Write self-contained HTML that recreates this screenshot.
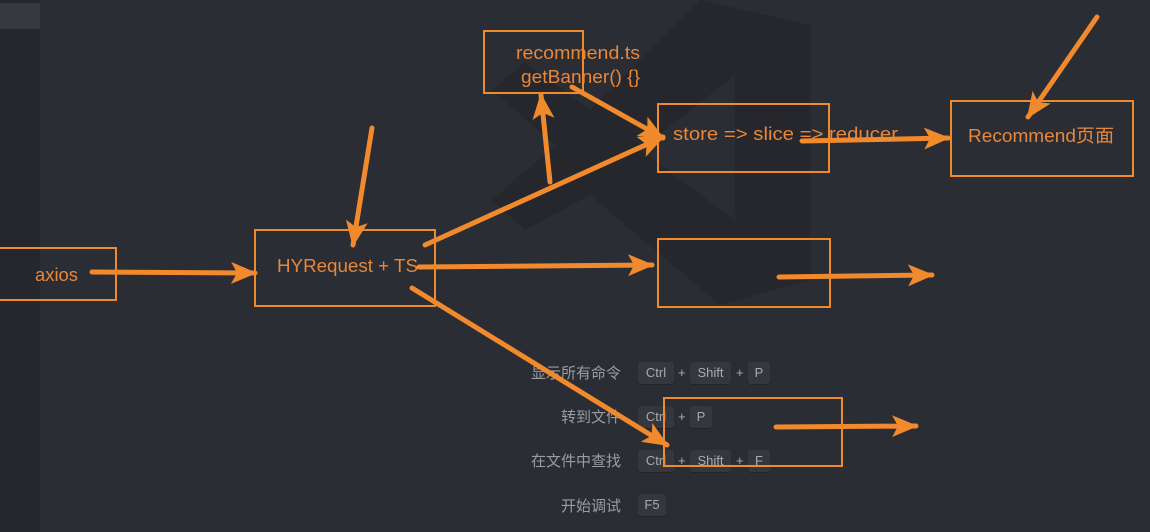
<!DOCTYPE html>
<html><head><meta charset="utf-8"><style>
html,body{margin:0;padding:0;}
body{width:1150px;height:532px;overflow:hidden;background:#2b2d34;position:relative;font-family:"Liberation Sans","Noto Sans CJK SC",sans-serif;}
svg{position:absolute;left:0;top:0;}
.lbl{position:absolute;right:529px;color:#9a9ca2;font-size:15px;white-space:nowrap;}
.k{position:absolute;height:22px;line-height:22px;background:#35373e;border-radius:3px;color:#a8aab0;font-size:13px;text-align:center;box-shadow:0 1px 0 #222328;}
.p{position:absolute;color:#a8aab0;font-size:13px;}
#top{z-index:2;}
</style></head><body>
<svg width="1150" height="532" viewBox="0 0 1150 532">
<rect x="0" y="0" width="40" height="532" fill="#25272d"/>
<rect x="0" y="3" width="40" height="26" fill="#363840"/>
<path d="M700,0 L810,25 L810,280 L720,305 L590,195 L525,230 L492,200 L555,145 L492,90 L525,62 L590,110 Z" fill="#25272c"/>
<path d="M735,75 L735,220 L640,150 Z" fill="#2b2d34"/>
</svg>
<div class="lbl" style="top:362px">显示所有命令</div>
<div class="lbl" style="top:406px">转到文件</div>
<div class="lbl" style="top:450px">在文件中查找</div>
<div class="lbl" style="top:495px">开始调试</div>
<div class="k" style="left:638px;top:362px;width:36px">Ctrl</div><div class="p" style="left:678px;top:365px">+</div>
<div class="k" style="left:690px;top:362px;width:41px">Shift</div><div class="p" style="left:736px;top:365px">+</div>
<div class="k" style="left:748px;top:362px;width:22px">P</div>
<div class="k" style="left:638px;top:406px;width:36px">Ctrl</div><div class="p" style="left:678px;top:409px">+</div>
<div class="k" style="left:690px;top:406px;width:22px">P</div>
<div class="k" style="left:638px;top:450px;width:36px">Ctrl</div><div class="p" style="left:678px;top:453px">+</div>
<div class="k" style="left:690px;top:450px;width:41px">Shift</div><div class="p" style="left:736px;top:453px">+</div>
<div class="k" style="left:748px;top:450px;width:22px">F</div>
<div class="k" style="left:638px;top:494px;width:28px">F5</div>
<svg id="top" width="1150" height="532" viewBox="0 0 1150 532">
<defs>
<marker id="a" markerUnits="userSpaceOnUse" markerWidth="26" markerHeight="24" refX="24" refY="12" orient="auto"><path d="M0,1 L26,12 L0,23 L6,12 Z" fill="#f08a2c"/></marker>
</defs>
<g fill="none" stroke="#f08a2c" stroke-width="2">
<rect x="-1" y="248" width="117" height="52"/>
<rect x="255" y="230" width="180" height="76"/>
<rect x="484" y="31" width="99" height="62"/>
<rect x="658" y="104" width="171" height="68"/>
<rect x="951" y="101" width="182" height="75"/>
<rect x="658" y="239" width="172" height="68"/>
<rect x="664" y="398" width="178" height="68"/>
</g>
<g fill="#e8873a" font-size="18" font-family="Liberation Sans,Noto Sans CJK SC,sans-serif">
<text x="35" y="281" textLength="43" lengthAdjust="spacingAndGlyphs">axios</text>
<text x="277" y="272" textLength="141" lengthAdjust="spacingAndGlyphs">HYRequest + TS</text>
<text x="516" y="59" textLength="124" lengthAdjust="spacingAndGlyphs">recommend.ts</text>
<text x="521" y="83" textLength="119" lengthAdjust="spacingAndGlyphs">getBanner() {}</text>
<text x="673" y="140" textLength="225" lengthAdjust="spacingAndGlyphs">store =&gt; slice =&gt; reducer</text>
<text x="968" y="142" textLength="146" lengthAdjust="spacingAndGlyphs">Recommend页面</text>
</g>
<g stroke="#f08a2c" stroke-width="5" stroke-linecap="round" fill="none" marker-end="url(#a)">
<line x1="92" y1="272" x2="255" y2="273"/>
<line x1="372" y1="128" x2="353" y2="245"/>
<line x1="425" y1="245" x2="663" y2="137"/>
<line x1="550" y1="182" x2="541" y2="95"/>
<line x1="572" y1="87" x2="663" y2="138"/>
<line x1="419" y1="267" x2="652" y2="265"/>
<line x1="412" y1="288" x2="667" y2="445"/>
<line x1="802" y1="141" x2="948" y2="138"/>
<line x1="1097" y1="17" x2="1028" y2="117"/>
<line x1="779" y1="277" x2="932" y2="275"/>
<line x1="776" y1="427" x2="916" y2="426"/>
</g>
</svg>
</body></html>
